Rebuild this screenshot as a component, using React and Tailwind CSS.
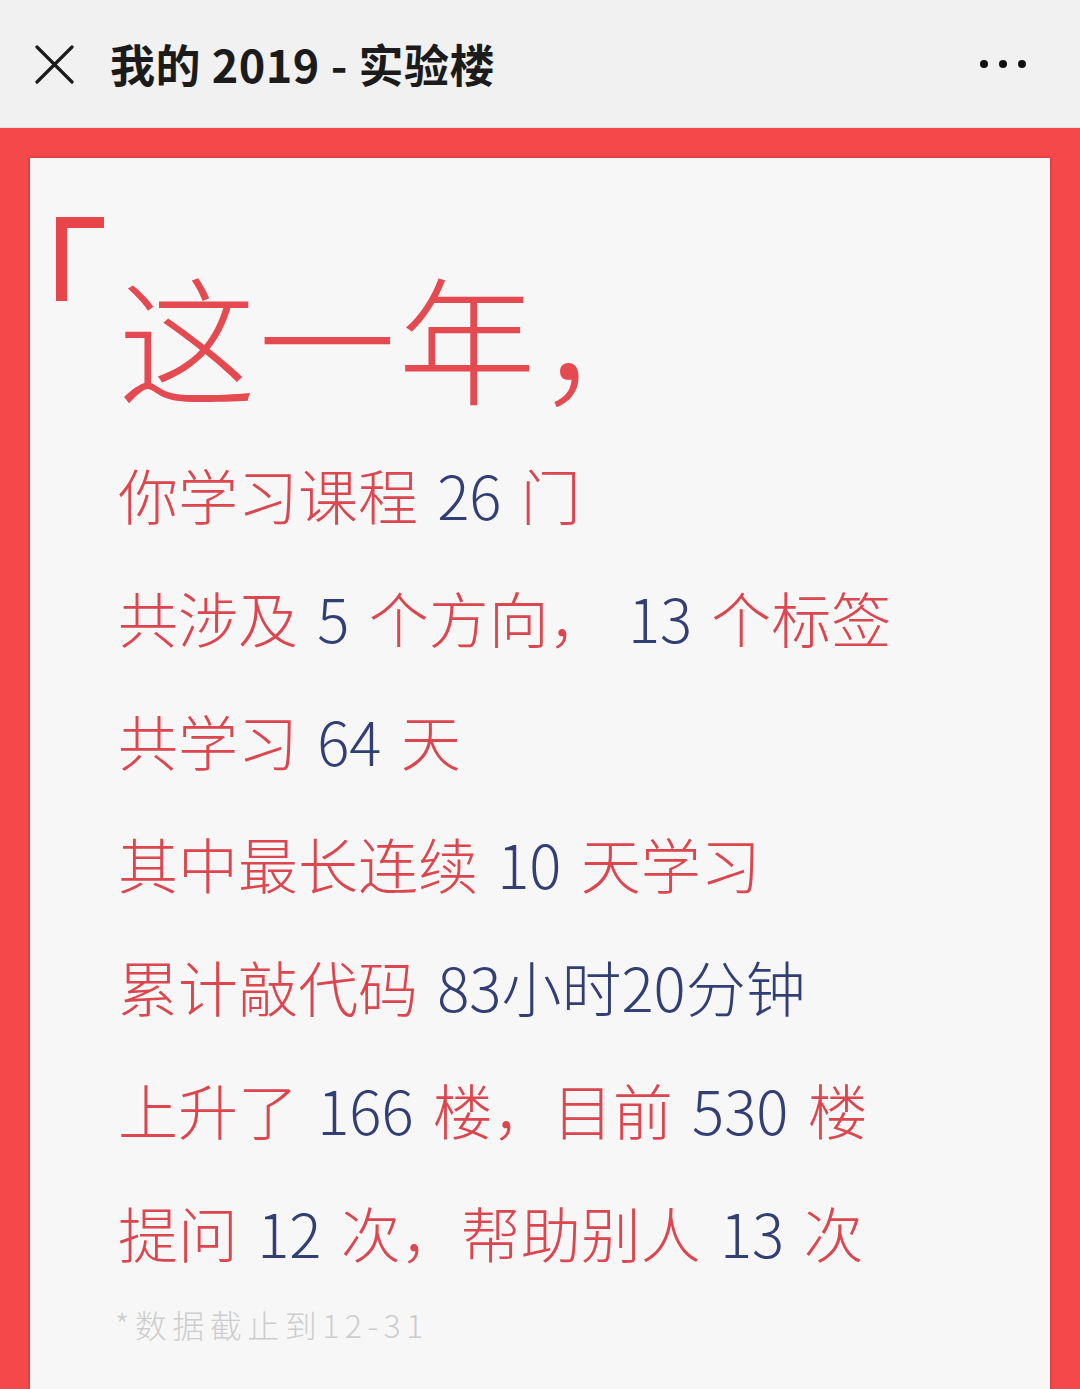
import React from 'react';

// ===========================================
// Colours
// ===========================================
// red text  #dc464e
// navy text #323f74

const FONT = { fontFamily: '"Noto Sans CJK SC", "Noto Sans", sans-serif' };

// ===========================================
// Stat line: red words + navy numbers
// ===========================================
function Line({ parts }) {
  return (
    <div className="h-[123px] leading-[123px] text-[60px] font-light whitespace-nowrap [word-spacing:6px]">
      {parts.map((p, i) =>
        typeof p === 'string' ? (
          <span key={i} className="text-[#dc464e]">{p}</span>
        ) : (
          <span key={i} className="text-[#323f74]">{p.n}</span>
        )
      )}
    </div>
  );
}

const LINES = [
  ['你学习课程 ', { n: '26' }, ' 门'],
  ['共涉及 ', { n: '5' }, ' 个方向， ', { n: '13' }, ' 个标签'],
  ['共学习 ', { n: '64' }, ' 天'],
  ['其中最长连续 ', { n: '10' }, ' 天学习'],
  ['累计敲代码 ', { n: '83小时20分钟' }],
  ['上升了 ', { n: '166' }, ' 楼，目前 ', { n: '530' }, ' 楼'],
  ['提问 ', { n: '12' }, ' 次，帮助别人 ', { n: '13' }, ' 次'],
];

// ===========================================
// App
// ===========================================
export default function App() {
  return (
    <div className="w-[1080px] h-[1389px] overflow-hidden flex flex-col bg-[#f1f1f1]" style={FONT}>

      {/* Top bar */}
      <div className="h-[128px] shrink-0 flex items-center pl-[34px] pr-[54px] bg-[#f1f1f1] border-b border-[#e6e2e2]">
        <svg width="40" height="40" viewBox="0 0 40 40" className="shrink-0">
          <path d="M3 3 L38 38 M38 3 L3 38" stroke="#1b1b1b" strokeWidth="3.2" strokeLinecap="round" />
        </svg>
        <h1 className="ml-[36px] text-[45px] font-bold text-[#1b1b1b] leading-none tracking-[0.5px]">
          我的 2019 - 实验楼
        </h1>
        <div className="ml-auto flex items-center gap-[11px]">
          <span className="w-[8px] h-[8px] rounded-full bg-[#111]" />
          <span className="w-[8px] h-[8px] rounded-full bg-[#111]" />
          <span className="w-[8px] h-[8px] rounded-full bg-[#111]" />
        </div>
      </div>

      {/* Red frame */}
      <div className="flex-1 bg-[#f4484b] pt-[30px] px-[30px] flex">
        <div className="relative flex-1 bg-[#f7f7f7] pt-[104px] pl-[88px] shadow-[0_0_3px_rgba(120,30,30,0.5)]">

          {/* Corner bracket */}
          <div className="absolute left-[26px] top-[59px] w-[48px] h-[84px] border-l-[11px] border-t-[11px] border-[#e8454a]" />

          <div className="text-[138px] leading-[144px] h-[144px] font-light text-[#e54a50] whitespace-nowrap tracking-[2px]">
            这一年，
          </div>

          <div className="mt-[26px]">
            {LINES.map((parts, i) => (
              <Line key={i} parts={parts} />
            ))}

            <div className="mt-[11px] -ml-[3px] h-[40px] leading-[40px] text-[32px] tracking-[5.5px] text-[#cdcdcd] font-light">
              *数据截止到12-31
            </div>
          </div>
        </div>
      </div>
    </div>
  );
}
